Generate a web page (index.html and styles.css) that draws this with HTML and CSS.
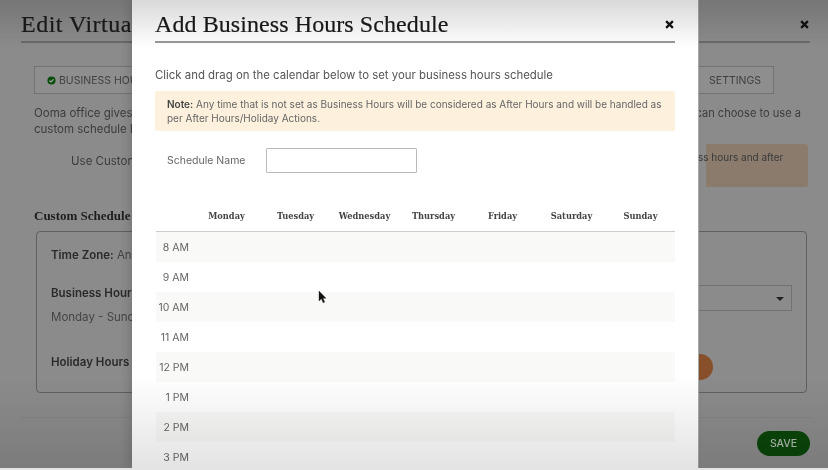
FILE: index.html
```html
<!DOCTYPE html>
<html lang="en">
<head>
<meta charset="utf-8">
<title>Add Business Hours Schedule</title>
<link rel="stylesheet" href="styles.css">
</head>
<body>
<div class="stage">
  <main class="page">
    <header class="page-head">
      <h1>Edit Virtua</h1>
      <svg class="close" viewBox="0 0 8 8"><path d="M1 1l6 6M7 1L1 7"/></svg>
    </header>
    <nav class="tabs">
      <div class="tab tab-active">
        <svg class="check" viewBox="0 0 10 10"><circle cx="5" cy="5" r="4.5" fill="#0b4d0b"/><path d="M2.8 5.1l1.6 1.6 2.9-3" fill="none" stroke="#a8a8a8" stroke-width="1.3"/></svg>
        BUSINESS HOU
      </div>
      <div class="tab tab-right">SETTINGS</div>
    </nav>
    <div class="intro">
      <div class="intro-line"><span>Ooma office gives</span><span class="intro-end">can choose to use a</span></div>
      <div class="intro-line"><span>custom schedule l</span></div>
    </div>
    <div class="custom-row">
      <span class="custom-label">Use Custom</span>
      <div class="callout">ss hours and after</div>
    </div>
    <h2 class="section">Custom Schedule</h2>
    <section class="box">
      <p class="line zone"><b>Time Zone:</b> An</p>
      <div class="hours-row">
        <div>
          <p class="line"><b>Business Hour</b></p>
          <p class="line days">Monday - Sund</p>
        </div>
        <div class="select"><span class="caret"></span></div>
      </div>
      <div class="holiday-row">
        <p class="line"><b>Holiday Hours</b></p>
        <span class="dot"></span>
      </div>
    </section>
    <footer class="page-foot">
      <button class="save">SAVE</button>
    </footer>
  </main>

  <div class="modal">
    <header class="modal-head">
      <h1>Add Business Hours Schedule</h1>
      <svg class="close" viewBox="0 0 8 8"><path d="M1 1l6 6M7 1L1 7"/></svg>
    </header>
    <p class="hint">Click and drag on the calendar below to set your business hours schedule</p>
    <div class="note"><b>Note:</b> Any time that is not set as Business Hours will be considered as After Hours and will be handled as per After Hours/Holiday Actions.</div>
    <div class="name-row">
      <label class="name-label" for="sname">Schedule Name</label>
      <input class="name-input" id="sname" type="text">
    </div>
    <div class="cal">
      <div class="cal-head">
        <span></span><span>Monday</span><span>Tuesday</span><span>Wednesday</span><span>Thursday</span><span>Friday</span><span>Saturday</span><span>Sunday</span>
      </div>
      <div class="cal-row"><span>8 AM</span></div>
      <div class="cal-row"><span>9 AM</span></div>
      <div class="cal-row"><span>10 AM</span></div>
      <div class="cal-row"><span>11 AM</span></div>
      <div class="cal-row"><span>12 PM</span></div>
      <div class="cal-row"><span>1 PM</span></div>
      <div class="cal-row"><span>2 PM</span></div>
      <div class="cal-row"><span>3 PM</span></div>
    </div>
  </div>

  <svg class="cursor" viewBox="0 0 9 14"><path d="M1 1v10l2.4-2.2 1.7 4 1.6-.7-1.7-3.9H8z" fill="#111" stroke="#333" stroke-width=".4"/></svg>
  <div class="fade"></div>
</div>
</body>
</html>
```
FILE: styles.css
```css
* { box-sizing: border-box; }
html, body { margin: 0; height: 100%; }
body {
  background: #e4e4e4;
  font-family: Inter, "Liberation Sans", sans-serif;
  overflow: hidden;
}
p, h1, h2 { margin: 0; }
.stage {
  position: relative;
  width: 828px;
  height: 468px;
  overflow: hidden;
  background: #8b8b8b;
  color: #3a3a3a;
  filter: blur(.35px);
}
.fade {
  position: absolute;
  inset: 0;
  pointer-events: none;
  background:
    linear-gradient(to bottom, rgba(0,0,0,.15) 0, rgba(0,0,0,0) 48px),
    linear-gradient(to top, rgba(0,0,0,.11) 0, rgba(0,0,0,0) 92px);
}
.page {
  height: 100%;
  padding: 0 15px 0 21px;
  display: flex;
  flex-direction: column;
}
.page-head, .modal-head {
  display: flex;
  justify-content: space-between;
  align-items: center;
  height: 43px;
  padding-top: 7px;
  border-bottom: 2px solid #6a6a6a;
}
.page-head { margin-right: 3px; }
.page-head h1, .modal-head h1 {
  font: 400 24px/1 "Liberation Serif", serif;
  color: #1a1a1a;
  letter-spacing: .08px;
  -webkit-text-stroke: .2px #1a1a1a;
  white-space: nowrap;
}
.page-head h1 { letter-spacing: .5px; }
.modal-head { border-bottom-color: #999; }
.close { width: 9px; height: 9px; margin-right: 1px; fill: none; stroke: #111; stroke-width: 2; }
.tabs {
  display: flex;
  justify-content: space-between;
  margin: 23px 39px 0 13px;
  height: 28px;
}
.tab {
  display: flex;
  align-items: center;
  gap: 3px;
  padding: 0 12px;
  border: 1px solid #737373;
  font-size: 10.5px;
  color: #3f3f3f;
  background: #8e8e8e;
  white-space: nowrap;
}
.tab-active { width: 130px; }
.tab-right { width: 120px; justify-content: flex-end; }
.check { width: 9px; height: 9px; }
.intro {
  margin: 11px 12px 0 13px;
  font-size: 11.5px;
  line-height: 16px;
  color: #3c3c3c;
  white-space: nowrap;
}
.intro-line { display: flex; justify-content: space-between; }
.intro-end { font-size: 11.1px; }
.custom-row {
  display: flex;
  justify-content: space-between;
  margin: 7px 5px 0 50px;
  height: 43px;
}
.custom-label { margin-top: 10px; font-size: 11.5px; line-height: 14px; color: #3c3c3c; white-space: nowrap; }
.callout {
  width: 150px;
  padding: 7px 0 0 40px;
  font-size: 10px;
  color: #3a3a3a;
  background: linear-gradient(to right, transparent 0, transparent 48px, #8a7b6c 48px);
  white-space: nowrap;
  border-radius: 3px;
}
.section {
  margin: 21px 0 0 13px;
  font: 700 13px/16px "Liberation Serif", serif;
  color: #1e1e1e;
  white-space: nowrap;
}
.box {
  margin: 7px 6px 0 15px;
  height: 162px;
  padding: 15px 14px 0;
  border: 1px solid #606060;
  border-radius: 4px;
}
.line { font-size: 11.5px; line-height: 16px; color: #444; white-space: nowrap; }
.line b { color: #2a2a2a; font-weight: 600; }
.hours-row {
  display: flex;
  justify-content: space-between;
  margin-top: 22px;
}
.days { margin-top: 8px; }
.select {
  position: relative;
  width: 300px;
  height: 26px;
  border: 1px solid #727272;
}
.caret {
  position: absolute;
  right: 7px;
  top: 11px;
  border: 4px solid transparent;
  border-top-color: #222;
  border-bottom: 0;
}
.holiday-row {
  display: flex;
  justify-content: space-between;
  align-items: flex-start;
  margin-top: 29px;
  padding-right: 79px;
}
.dot { width: 26px; height: 26px; border-radius: 50%; background: #88502a; }
.page-foot {
  margin: 24px 0 0;
  padding-top: 13px;
  border-top: 1px solid #838383;
  display: flex;
  justify-content: flex-end;
  padding-right: 3px;
}
.save {
  width: 53px;
  height: 25px;
  border: 0;
  border-radius: 13px;
  background: #0a460a;
  color: #b0b8b0;
  font: 500 10.5px Inter, sans-serif;
}
.modal {
  position: absolute;
  left: 132px;
  top: 0;
  width: 567px;
  height: 468px;
  padding: 0 23px;
  background: #fff;
  border-right: 1px solid #aaa;
  box-shadow: -4px 0 8px rgba(0,0,0,.12);
}
.hint { margin-top: 25px; font-size: 11.4px; line-height: 14px; color: #555; white-space: nowrap; }
.note {
  margin-top: 9px;
  height: 40px;
  padding: 6px 12px;
  background: #fdf1de;
  border-radius: 2px;
  font-size: 10px;
  line-height: 14px;
  color: #666;
}
.note b { color: #444; font-weight: 600; }
.name-row {
  display: flex;
  align-items: center;
  margin-top: 17px;
  height: 25px;
}
.name-label { width: 111px; padding-left: 12px; font-size: 10.5px; color: #666; white-space: nowrap; }
.name-input { width: 151px; height: 25px; border: 1px solid #bbb; background: #fff; border-radius: 1px; }
.cal { margin-top: 30px; padding-left: 1px; }
.cal-head {
  display: grid;
  grid-template-columns: 36px repeat(7, 69px);
  height: 29px;
  padding-bottom: 2px;
  align-items: center;
  border-bottom: 1px solid #ccc;
  font: 700 9.2px/1 "DejaVu Serif", serif;
  font-stretch: condensed;
  color: #444;
  text-align: center;
  white-space: nowrap;
}
.cal-row {
  height: 30px;
  width: 519px;
  padding-top: 10px;
}
.cal-row:nth-child(even) { background: #f9f9f8; }
.cal-row span {
  display: block;
  width: 33px;
  text-align: right;
  font-size: 10.5px;
  line-height: 12px;
  color: #666;
  white-space: nowrap;
}
.cursor { position: absolute; left: 318px; top: 290px; width: 9px; height: 14px; }
```
